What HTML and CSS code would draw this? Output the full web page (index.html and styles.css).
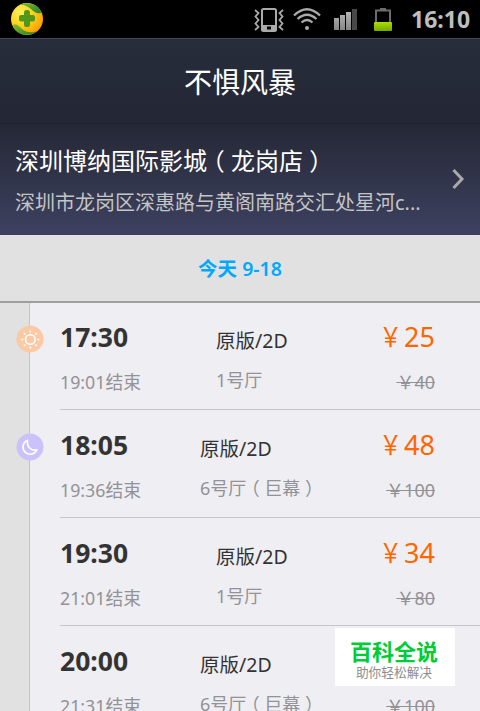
FILE: index.html
```html
<!DOCTYPE html>
<html lang="zh-CN">
<head>
<meta charset="utf-8">
<title>不惧风暴</title>
<link rel="stylesheet" href="styles.css">
</head>
<body>
<div class="screen">
  <div class="status">
    <svg class="logo" width="34" height="34" viewBox="0 0 34 34">
      <defs>
        <radialGradient id="gold" cx=".3" cy=".3" r=".8"><stop offset="0" stop-color="#fff060"/><stop offset=".45" stop-color="#ffd51c"/><stop offset="1" stop-color="#f99a00"/></radialGradient>
        <linearGradient id="leaf" x1="0" y1="0" x2="1" y2="1"><stop offset="0" stop-color="#86b82c"/><stop offset="1" stop-color="#1d8628"/></linearGradient>
      </defs>
      <circle cx="17" cy="17" r="16" fill="url(#gold)"/>
      <path d="M9 3C17-1 30 2 31 11C27 12 24 10 21 7C17 4 13 2 9 3Z" fill="url(#leaf)"/>
      <path d="M3 23C6 21 9 24 12 27C17 31 22 31 27 29C18 36 5 33 3 23Z" fill="url(#leaf)"/>
      <path d="M14 10.500Q14 8 16 8H18Q20 8 20 10.500V13H23Q25 13 25 15V17.500Q25 19.500 23 19.500H20V22.500Q20 25 18 25H16Q14 25 14 22.500V19.500H11Q9 19.500 9 17.500V15Q9 13 11 13H14Z" fill="#50971c"/>
    </svg>
    <div class="tray">
      <svg width="30" height="24" viewBox="0 0 30 24" fill="none" stroke="#aaa">
        <path d="M1 2L4.500 5L1.500 8.500L4.500 12L1.500 15.500L4.500 19L1 22M29 2L25.500 5L28.500 8.500L25.500 12L28.500 15.500L25.500 19L29 22" stroke-width="1.800"/>
        <rect x="8" y="1" width="14" height="22" rx="1.500" stroke-width="2"/>
        <path d="M7.500 17H22.500V23H7.500Z" fill="#aaa" stroke="none"/>
        <path d="M13 18.500H17V21.500H13Z" fill="#000" stroke="none"/>
      </svg>
      <svg class="wifi" width="28" height="24" viewBox="0 0 28 24" fill="none" stroke="#aaa" stroke-width="2.200">
        <path d="M1 7.500Q14-5 27 7.500M4.500 11Q14 2.500 23.500 11M8.500 14.500Q14 9.500 19.500 14.500"/>
        <circle cx="14" cy="20" r="2" fill="#aaa" stroke="none"/>
      </svg>
      <svg class="signal" width="24" height="22" viewBox="0 0 24 22">
        <defs><linearGradient id="bar" x1="0" y1="0" x2="0" y2="1"><stop offset="0" stop-color="#b5b5b5"/><stop offset="1" stop-color="#858585"/></linearGradient></defs>
        <path d="M1 9H6V21H1ZM7 6H12V21H7ZM13 3H18V21H13Z" fill="url(#bar)"/>
        <path d="M19 0H24V21H19Z" fill="#484848"/>
      </svg>
      <svg class="battery" width="20" height="25" viewBox="0 0 20 25">
        <defs><linearGradient id="charge" x1="0" y1="0" x2="0" y2="1"><stop offset="0" stop-color="#a6e000"/><stop offset="1" stop-color="#76a800"/></linearGradient></defs>
        <path d="M3 16V3.500H17V16M7 2H13" fill="none" stroke="#6c6c6c" stroke-width="2"/>
        <rect x="1" y="15" width="18" height="9" rx="1" fill="url(#charge)"/>
      </svg>
      <span class="clock">16:10</span>
    </div>
  </div>
  <div class="top">
    <h1 class="title">不惧风暴</h1>
    <div class="cinema">
      <div>
        <div class="name">深圳博纳国际影城<span class="open">（</span>龙岗店<span class="close">）</span></div>
        <div class="address">深圳市龙岗区深惠路与黄阁南路交汇处星河c...</div>
      </div>
      <svg class="chevron" width="14" height="22" viewBox="0 0 14 22"><path d="M1.500 2L10 11L1.500 20" fill="none" stroke="#aaa" stroke-width="3"/></svg>
    </div>
  </div>
  <div class="date">今天 9-18</div>
  <div class="list">
    <div class="row">
      <div class="rail"><svg class="badge" width="28" height="28" viewBox="0 0 28 28" fill="none" stroke="#fff" stroke-width="1.600">
        <circle cx="14" cy="14" r="13.500" fill="#fbc9a4" stroke="none"/><circle cx="14.300" cy="14.500" r="4.800"/>
        <path d="M14.300 5.500V7.500M14.300 21.500V23.500M5.300 14.500H7.300M21.300 14.500H23.300M7.900 8.100L9.300 9.500M19.300 19.500L20.700 20.900M7.900 20.900L9.300 19.500M19.300 9.500L20.700 8.100"/></svg></div>
      <div class="show">
        <div class="when"><div class="start">17:30</div><div class="end">19:01结束</div></div>
        <div class="hall narrow"><div class="format">原版/2D</div><div class="room">1号厅</div></div>
        <div class="cost"><div class="price"><span class="yen">￥</span>25</div><div class="old">￥40</div></div>
      </div>
    </div>
    <div class="row">
      <div class="rail"><svg class="badge" width="28" height="28" viewBox="0 0 28 28" fill="none" stroke="#fff" stroke-width="1.600" stroke-linejoin="round">
        <circle cx="14" cy="14" r="13.500" fill="#cbc1fb" stroke="none"/>
        <path d="M11.500 7.200A7.300 7.300 0 1 0 21 16.800C15 18.500 10.500 13.500 11.500 7.200Z"/></svg></div>
      <div class="show">
        <div class="when"><div class="start">18:05</div><div class="end">19:36结束</div></div>
        <div class="hall"><div class="format">原版/2D</div><div class="room">6号厅<span class="open">（</span>巨幕<span class="close">）</span></div></div>
        <div class="cost"><div class="price"><span class="yen">￥</span>48</div><div class="old">￥100</div></div>
      </div>
    </div>
    <div class="row">
      <div class="rail"></div>
      <div class="show">
        <div class="when"><div class="start">19:30</div><div class="end">21:01结束</div></div>
        <div class="hall narrow"><div class="format">原版/2D</div><div class="room">1号厅</div></div>
        <div class="cost"><div class="price"><span class="yen">￥</span>34</div><div class="old">￥80</div></div>
      </div>
    </div>
    <div class="row">
      <div class="rail"></div>
      <div class="show">
        <div class="when"><div class="start">20:00</div><div class="end">21:31结束</div></div>
        <div class="hall"><div class="format">原版/2D</div><div class="room">6号厅<span class="open">（</span>巨幕<span class="close">）</span></div></div>
        <div class="cost"><div class="price">&nbsp;</div><div class="old">￥100</div></div>
      </div>
    </div>
  </div>
  <div class="mark"><div class="brand">百科全说</div><div class="slogan">助你轻松解决</div></div>
</div>
</body>
</html>
```
FILE: styles.css
```css
* { box-sizing: border-box; }
body { margin: 0; font-family: "Noto Sans", "Noto Sans CJK SC", sans-serif; }
.screen { position: relative; width: 480px; height: 711px; overflow: hidden; background: #efeef3; white-space: nowrap; }
.status { display: flex; justify-content: space-between; height: 38px; padding: 2px 10px 0; background: #000; }
.tray { display: flex; align-items: flex-start; padding-top: 6px; }
.wifi { margin-left: 9px; }
.signal { margin: 1px 0 0 12px; }
.battery { margin-left: 16px; margin-top: -1px; }
.clock { margin-left: 18px; margin-top: -4px; width: 59px; font-size: 23px; line-height: 31px; font-weight: 700; color: #bebebe; }
.top { height: 197px; border-top: 1px solid #454557; background: linear-gradient(#272d3b, #242735 43%, #2b2e3f 57%, #3d4160); color: #fff; }
.title { margin: 0; height: 85px; border-bottom: 1px solid #1c1f2c; text-align: center; font-size: 28px; line-height: 86px; font-weight: 400; }
.cinema { display: flex; justify-content: space-between; padding: 18px 14px 0 15px; }
.name { font-size: 24px; line-height: 38px; }
.address { font-size: 20px; line-height: 30px; margin-top: 8px; color: #c4c4c4; }
.open, .close { position: relative; }
.open { left: -.26em; }
.close { left: .26em; }
.chevron { margin-top: 26px; }
.date { height: 68px; border-bottom: 2px solid #9e9f9e; background: #e1e1e1; color: #00a8ff; text-align: center; font-size: 19.5px; line-height: 67px; font-weight: 600; }
.row { display: flex; height: 108px; }
.row:first-child { height: 107px; }
.row:first-child .rail { padding-top: 22px; }
.row:first-child .show { padding-top: 15px; }
.rail { width: 30px; padding: 23px 0 0 16px; background: #e1e1e1; border-right: 1px solid #c4c4c8; }
.badge { display: block; position: relative; }
.show { flex: 1; display: flex; margin-left: 30px; padding: 16px 45px 0 0; border-bottom: 1px solid #c6c5cb; }
.when { width: 140px; }
.start { font-size: 26.5px; line-height: 39px; font-weight: 700; color: #333; }
.end, .old, .room { font-size: 18px; line-height: 26px; color: #939297; }
.end { margin-top: 12px; font-size: 17.8px; }
.old { margin-top: 14px; }
.hall { width: 130px; padding-top: 7px; }
.narrow { padding-left: 16px; }
.format { font-size: 19.5px; line-height: 31px; color: #333; }
.room { margin-top: 11px; }
.cost { flex: 1; text-align: right; }
.price { height: 37px; font-size: 27px; line-height: 37px; color: #ff6600; }
.old { text-decoration: line-through; }
.yen { display: inline-block; transform: scaleX(.84); }
.mark { position: absolute; left: 335px; top: 628px; width: 120px; height: 58px; padding: 9px 2px 0 0; background: #fff; text-align: center; }
.brand { font-size: 22px; line-height: 28px; font-weight: 700; color: #00cc33; }
.slogan { font-size: 12.7px; line-height: 15px; color: #8c8c8c; }
```
